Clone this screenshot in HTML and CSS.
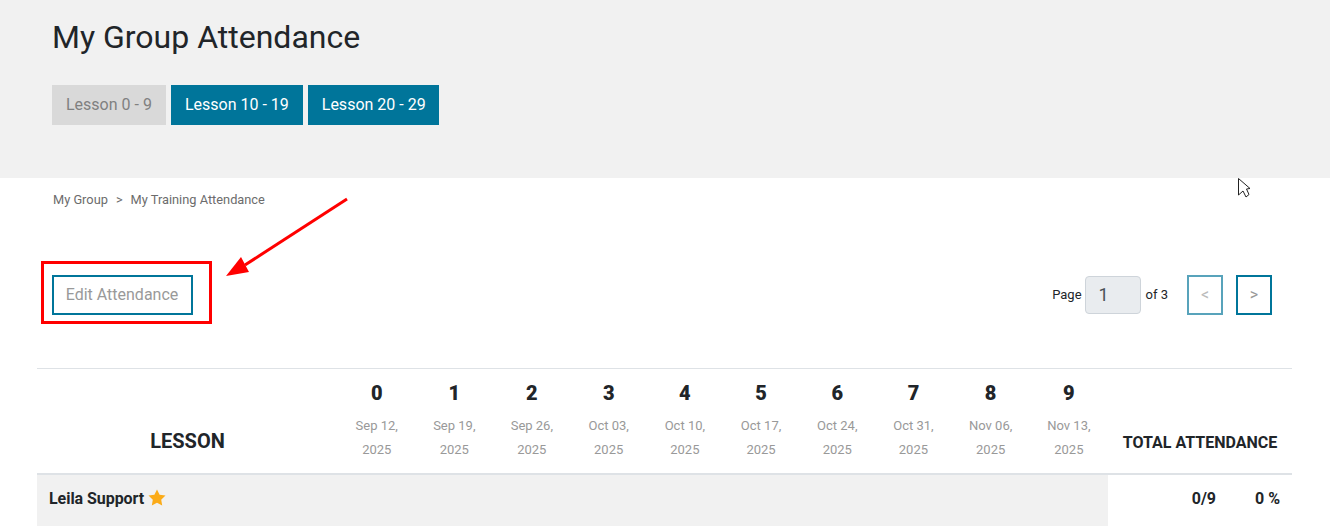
FILE: index.html
```html
<!DOCTYPE html>
<html lang="en">
<head>
    <meta charset="UTF-8">
    <meta name="viewport" content="width=device-width, initial-scale=1.0">
    <title>My Group Attendance</title>
    <link rel="stylesheet" href="styles.css">
</head>
<body>
    <header class="page-head">
        <h1>My Group Attendance</h1>
        <div class="lesson-tabs">
            <button class="tab tab-off" type="button">Lesson 0 - 9</button>
            <button class="tab" type="button">Lesson 10 - 19</button>
            <button class="tab" type="button">Lesson 20 - 29</button>
        </div>
    </header>

    <nav class="crumbs">
        <a href="#">My Group</a>
        <span class="crumb-sep">&gt;</span>
        <a href="#">My Training Attendance</a>
    </nav>

    <div class="toolbar">
        <button class="edit-button" type="button">Edit Attendance</button>
        <div class="pager">
            <span>Page</span>
            <input class="page-input" type="text" value="1" readonly>
            <span>of 3</span>
            <button class="page-button prev" type="button">&lt;</button>
            <button class="page-button" type="button">&gt;</button>
        </div>
    </div>

    <table class="attendance">
        <thead>
            <tr>
                <th class="lesson-col">LESSON</th>
                <th class="day"><b>0</b><span>Sep 12, 2025</span></th>
                <th class="day"><b>1</b><span>Sep 19, 2025</span></th>
                <th class="day"><b>2</b><span>Sep 26, 2025</span></th>
                <th class="day"><b>3</b><span>Oct 03, 2025</span></th>
                <th class="day"><b>4</b><span>Oct 10, 2025</span></th>
                <th class="day"><b>5</b><span>Oct 17, 2025</span></th>
                <th class="day"><b>6</b><span>Oct 24, 2025</span></th>
                <th class="day"><b>7</b><span>Oct 31, 2025</span></th>
                <th class="day"><b>8</b><span>Nov 06, 2025</span></th>
                <th class="day"><b>9</b><span>Nov 13, 2025</span></th>
                <th class="total-col">TOTAL ATTENDANCE</th>
            </tr>
        </thead>
        <tbody>
            <tr>
                <td class="leader" colspan="11">
                    Leila Support
                    <svg class="star" width="18" height="17" viewBox="0 0 18 17"><path d="M9 0.4l2.6 5.4 5.9.8-4.3 4.1 1 5.9L9 13.8l-5.2 2.8 1-5.9L.5 6.6l5.9-.8z"/></svg>
                </td>
                <td class="totals"><span>0/9</span><span>0 %</span></td>
            </tr>
        </tbody>
    </table>

    <!-- red markup drawn on top of the screenshot -->
    <div class="mark-box"></div>
    <svg class="mark-arrow" width="130" height="90" viewBox="0 0 130 90">
        <line x1="122" y1="2" x2="20" y2="68" stroke="#f00" stroke-width="3"/>
        <polygon points="1,79 16,60 24,75" fill="#f00"/>
    </svg>
    <svg class="cursor" width="14" height="20" viewBox="0 0 14 20">
        <path d="M.5.5V17L5 13l3 6 3-2.5L8.500 11l3.500-.5z" fill="#fff" stroke="#222" stroke-width="1"/>
    </svg>
</body>
</html>
```

FILE: styles.css
```css
html, body {
    height: 100%;
    overflow: hidden;
}

body {
    font-family: 'Roboto', sans-serif;
    background-color: #fff;
    color: #212529;
    margin: 0;
    position: relative;
}

.page-head {
    background-color: #f1f1f1;
    height: 178px;
    box-sizing: border-box;
    padding: 18px 52px 0;
}

h1 {
    font-size: 32px;
    font-weight: 400;
    line-height: 38px;
    margin: 0 0 29px;
}

.lesson-tabs {
    display: flex;
    gap: 5px;
}

.tab {
    height: 40px;
    padding: 0 14px 2px;
    border: none;
    background-color: #00759a;
    color: #fff;
    font-family: inherit;
    font-size: 16px;
}

.tab:last-child {
    padding-right: 13px;
}

.tab-off {
    background-color: #d9d9d9;
    color: #808080;
}

.crumbs {
    display: flex;
    gap: 8px;
    padding: 14px 53px 0;
    font-size: 12.8px;
    line-height: 16px;
    color: #6c6c6c;
}

.crumbs a {
    color: inherit;
    text-decoration: none;
}

.toolbar {
    display: flex;
    justify-content: space-between;
    align-items: center;
    height: 40px;
    margin-top: 67px;
    padding: 0 58px 0 52px;
}

.edit-button {
    height: 40px;
    width: 141px;
    padding: 0 1px 2px 0;
    border: 2px solid #00759a;
    background-color: #fff;
    color: #999;
    font-family: inherit;
    font-size: 16px;
}

.pager {
    display: flex;
    align-items: center;
    font-size: 13px;
}

.pager span {
    padding-bottom: 2px;
}

.page-input {
    width: 56px;
    height: 38px;
    box-sizing: border-box;
    margin: 0 5px 0 3px;
    padding: 0 13px 2px;
    border: 1px solid #ced4da;
    border-radius: 4px;
    background-color: #e9ecef;
    color: #495057;
    font-family: inherit;
    font-size: 18px;
}

.page-button {
    width: 36px;
    height: 40px;
    margin-left: 13px;
    padding: 0 0 2px;
    border: 2px solid #00759a;
    background-color: #fff;
    color: #999;
    font-family: inherit;
    font-size: 16px;
}

.page-button.prev {
    margin-left: 19px;
    border-color: #58a3bb;
    color: #bbb;
}

.attendance {
    width: 1255px;
    margin: 53px 0 0 37px;
    border-collapse: collapse;
}

.attendance th {
    padding: 0;
    border-top: 1px solid #dee2e6;
    border-bottom: 2px solid #dee2e6;
    vertical-align: bottom;
}

.lesson-col {
    width: 301px;
    height: 84px;
    padding-bottom: 20px !important;
    font-size: 20px;
    line-height: 24px;
    font-weight: 700;
}

.day b {
    display: block;
    font-size: 20px;
    line-height: 24px;
    margin-bottom: 9px;
}

.day span {
    display: block;
    height: 48px;
    padding: 0 8px 11px;
    font-size: 13px;
    font-weight: 400;
    line-height: 24px;
    color: #999;
}

.total-col {
    width: 184px;
    padding-bottom: 20px !important;
    font-size: 16px;
    line-height: 20px;
    font-weight: 700;
    white-space: nowrap;
}

.attendance td {
    height: 51px;
    box-sizing: border-box;
    padding: 0;
    vertical-align: top;
}

.leader {
    background-color: #f1f1f1;
    padding: 14px 0 0 12px !important;
    font-size: 16px;
    line-height: 20px;
    font-weight: 700;
    letter-spacing: -0.05px;
}

.star {
    fill: #fbab18;
    vertical-align: -2px;
}

.totals {
    display: flex;
    justify-content: flex-end;
    gap: 39px;
    padding: 14px 12px 0 0 !important;
    font-size: 16px;
    line-height: 20px;
    font-weight: 700;
}

.mark-box {
    position: absolute;
    left: 41px;
    top: 261px;
    width: 171px;
    height: 63px;
    box-sizing: border-box;
    border: 3px solid #f00;
}

.mark-arrow {
    position: absolute;
    left: 225px;
    top: 197px;
}

.cursor {
    position: absolute;
    left: 1238px;
    top: 178px;
}
```
